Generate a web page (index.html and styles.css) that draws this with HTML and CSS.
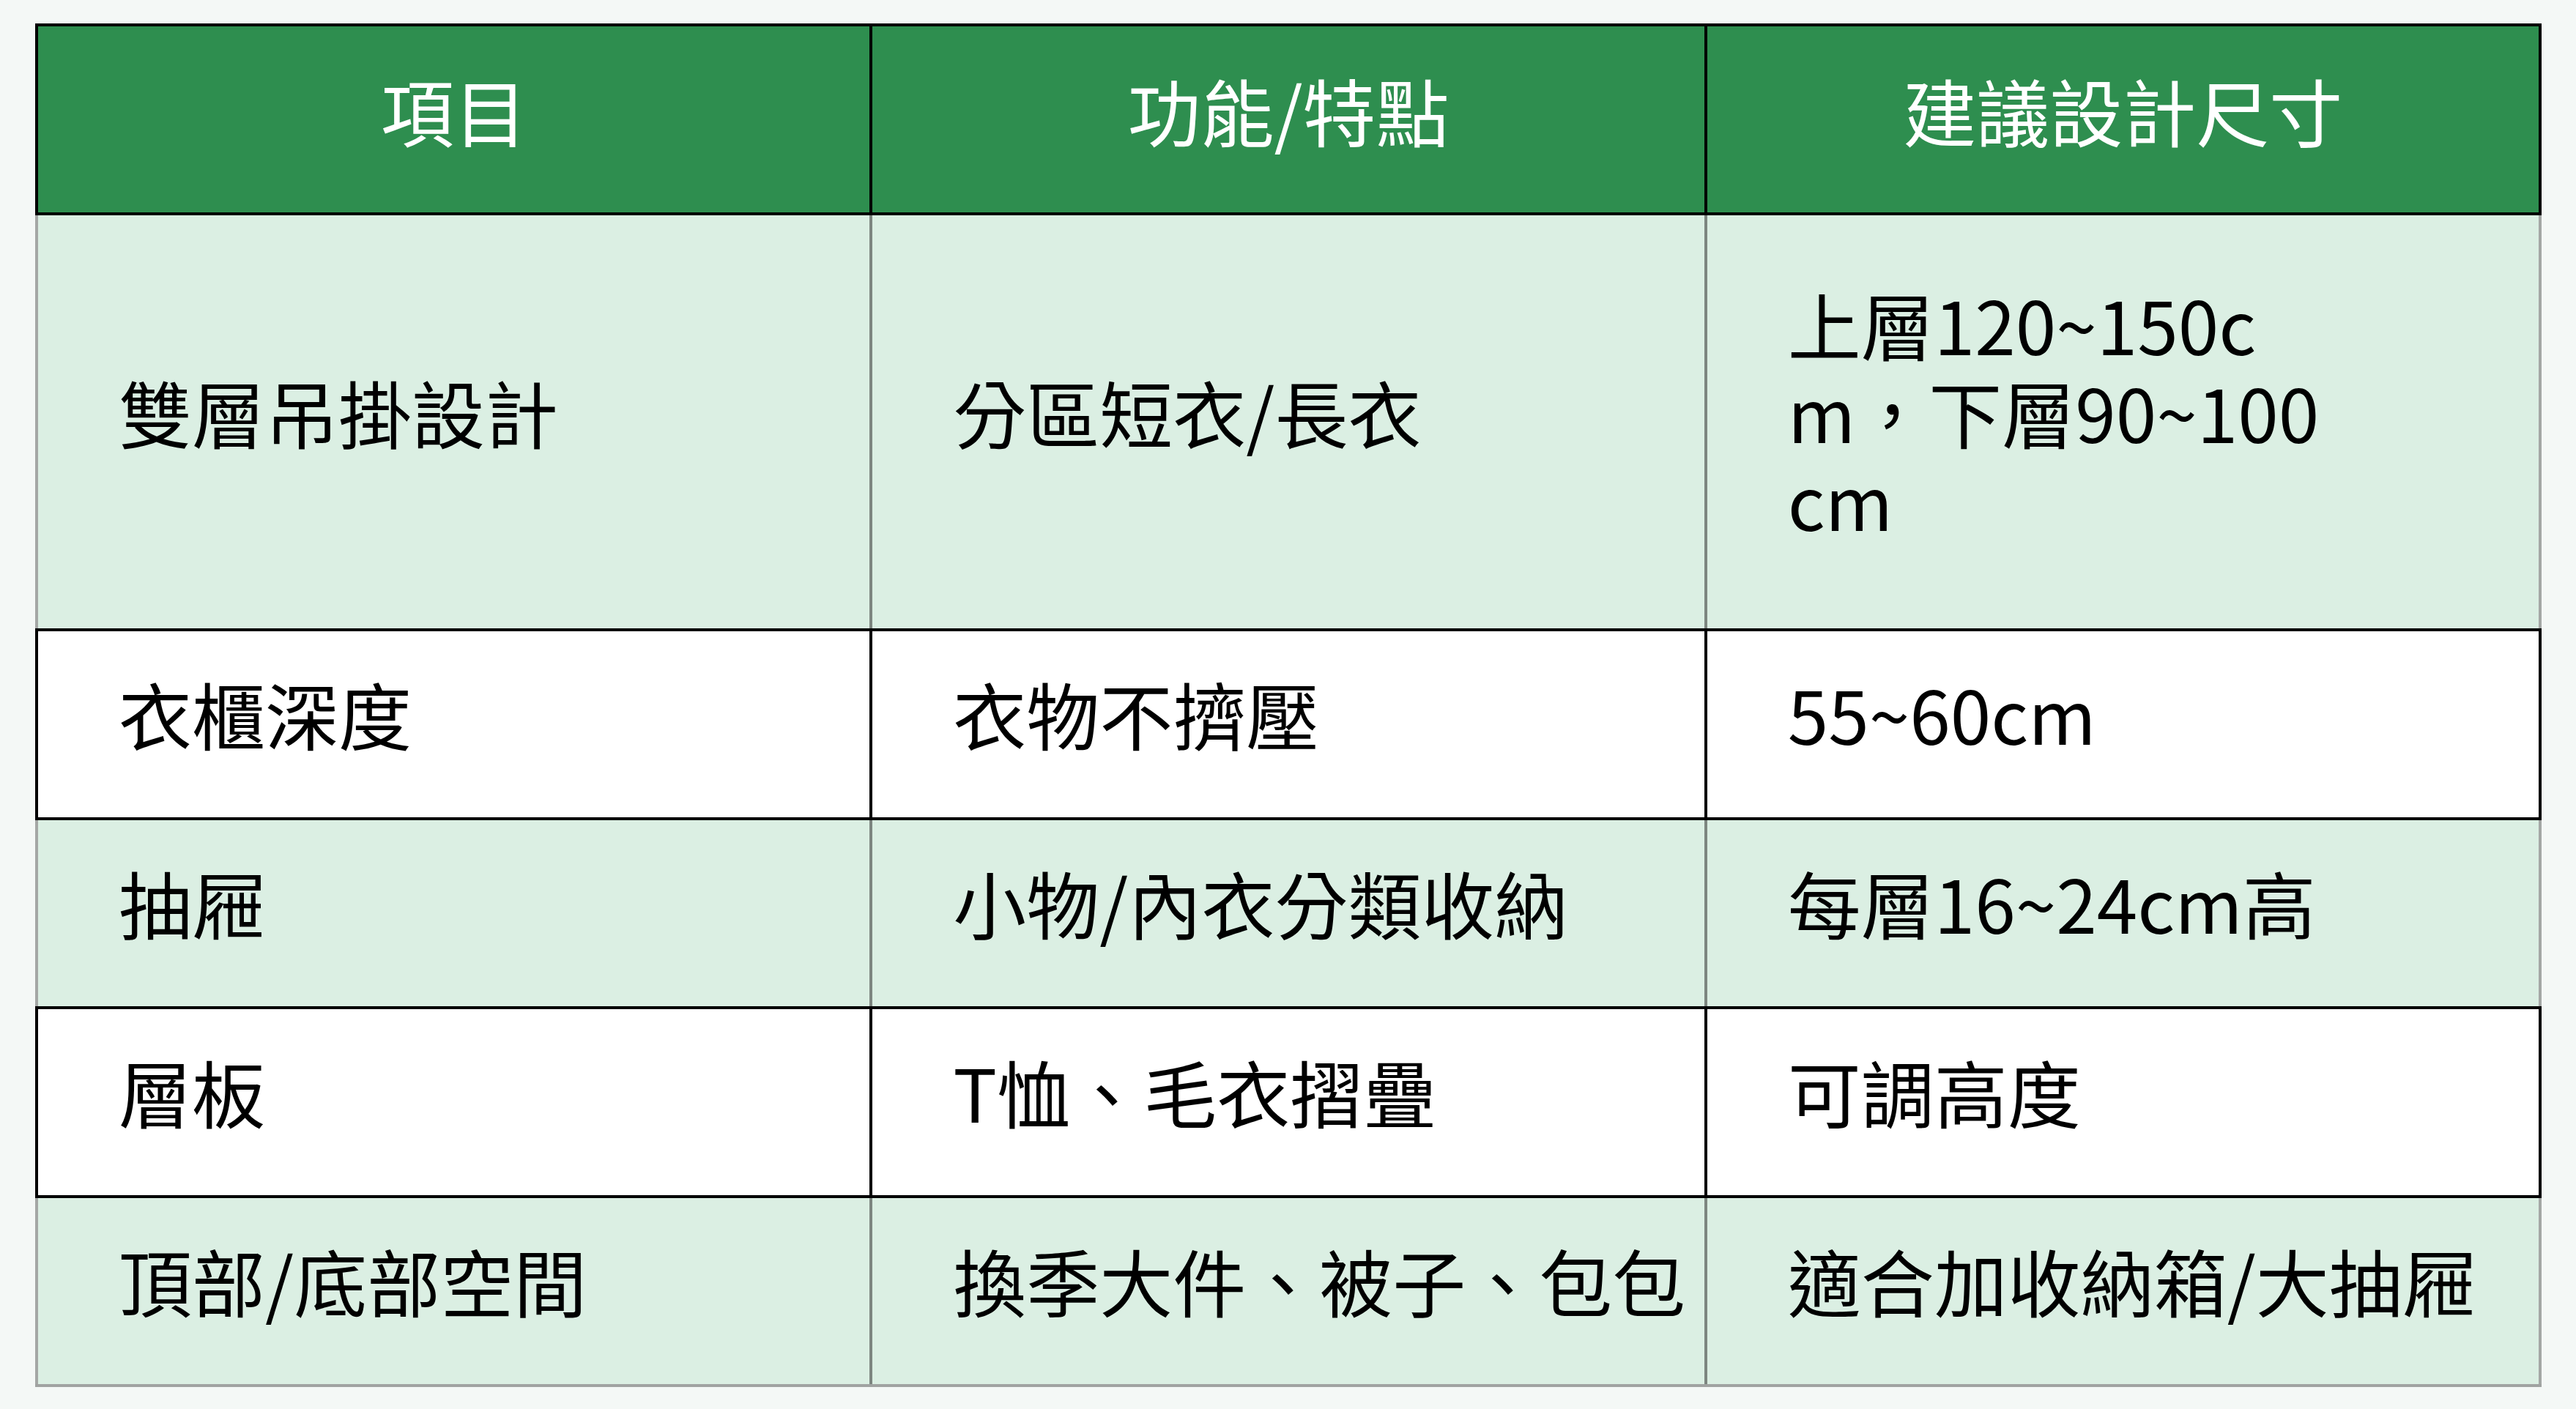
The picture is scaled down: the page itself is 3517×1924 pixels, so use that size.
FILE: index.html
```html
<!DOCTYPE html>
<html lang="zh-Hant">
<head>
<meta charset="utf-8">
<title>衣櫃設計尺寸</title>
<link rel="stylesheet" href="styles.css">
</head>
<body>
<table class="spec">
  <colgroup><col class="c"><col class="c"><col class="c"></colgroup>
  <thead>
    <tr><th>項目</th><th>功能/特點</th><th>建議設計尺寸</th></tr>
  </thead>
  <tbody>
    <tr class="alt tall"><td>雙層吊掛設計</td><td>分區短衣/長衣</td><td>上層120~150c<br>m，下層90~100<br>cm</td></tr>
    <tr><td>衣櫃深度</td><td>衣物不擠壓</td><td>55~60cm</td></tr>
    <tr class="alt"><td>抽屜</td><td>小物/內衣分類收納</td><td>每層16~24cm高</td></tr>
    <tr><td>層板</td><td>T恤、毛衣摺疊</td><td>可調高度</td></tr>
    <tr class="alt last"><td>頂部/底部空間</td><td>換季大件、被子、包包</td><td>適合加收納箱/大抽屜</td></tr>
  </tbody>
</table>
</body>
</html>
```
FILE: styles.css
```css
html, body {
  margin: 0;
  padding: 0;
  background: #f4f8f6;
}
body {
  padding: 32px 0 0 48px;
  font-family: "Noto Sans CJK TC", "Noto Sans", sans-serif;
  color: #000;
}
.spec {
  border-collapse: collapse;
  table-layout: fixed;
  width: 3422px;
}
.spec .c { width: 33.333%; }
.spec th, .spec td {
  border: 4px solid #000;
  font-size: 100px;
  line-height: 120px;
  font-weight: 400;
  white-space: nowrap;
  vertical-align: middle;
}
.spec th {
  background: #2e8e4f;
  color: #fff;
  text-align: center;
  padding: 54px 0 80px;
}
.spec td {
  background: #fff;
  text-align: left;
  padding: 52px 0 82px 110px;
}
.spec tr.tall td {
  padding-top: 88px;
  padding-bottom: 116px;
}
.spec tr.alt td {
  background: #dbefe3;
  border-left-color: #7d8680;
  border-right-color: #7d8680;
}
.spec tr.alt td:first-child { border-left-color: #a4a7a5; }
.spec tr.alt td:last-child { border-right-color: #a4a7a5; }
.spec tr.last td { border-bottom-color: #a0a3a1; }
```
